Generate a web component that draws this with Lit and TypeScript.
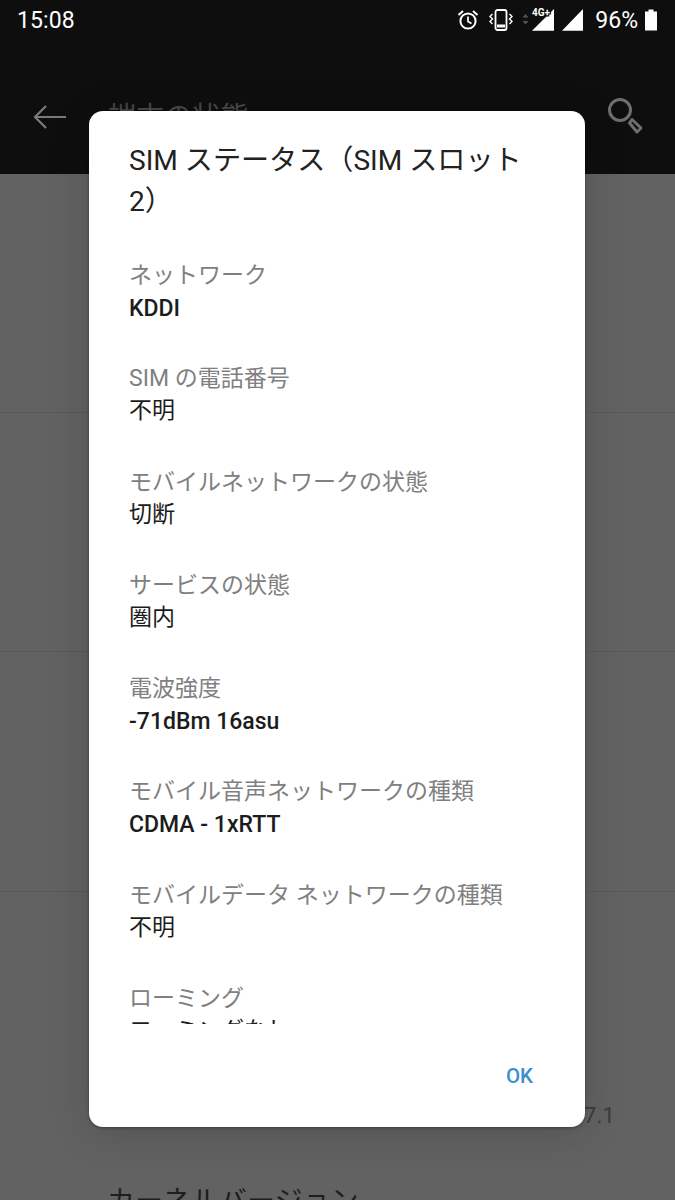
import { LitElement, html, css } from "lit";
import { customElement } from "lit/decorators.js";

const items: [string, string, boolean][] = [
  ["ネットワーク", "KDDI", true],
  ["SIM の電話番号", "不明", false],
  ["モバイルネットワークの状態", "切断", false],
  ["サービスの状態", "圏内", false],
  ["電波強度", "-71dBm 16asu", true],
  ["モバイル音声ネットワークの種類", "CDMA - 1xRTT", true],
  ["モバイルデータ ネットワークの種類", "不明", false],
  ["ローミング", "ローミングなし", false],
];

@customElement("app-root")
export class AppRoot extends LitElement {
  static styles = css`
    :host {
      display: block;
      position: relative;
      width: 675px;
      height: 1200px;
      overflow: hidden;
      background: #626262;
      font-family: Roboto, "Noto Sans CJK JP", sans-serif;
    }
    .top { background: #0e0e0e; height: 174px; display: flex; flex-direction: column; }
    .status { height: 40px; display: flex; align-items: center; padding: 0 17px; color: #fff; font-size: 23px; }
    .time { flex: 1; letter-spacing: 0.1px; }
    .status svg { display: block; flex: none; }
    .vib { margin-left: 10px; }
    .sig { margin-left: 9px; }
    .pct { margin: 0 6px 0 11px; }
    .appbar { flex: 1; display: flex; align-items: center; padding: 0 31px 0 33px; }
    .title { flex: 1; margin-left: 41px; color: #484848; font-size: 28.100px; padding-top: 14px; }
    .appbar svg { display: block; }
    .back { margin-top: 20px; }
    .search { margin-top: 18px; }
    .row { height: 238px; border-bottom: 1px solid #5a5a5a; }
    .row.last { height: 239px; }
    .ver { text-align: right; padding: 208px 60px 0 0; color: #3c3c3c; font-size: 22.500px; line-height: 30px; }
    .kernel { padding: 52px 0 0 107px; color: #1e1e1e; font-size: 28px; line-height: 40px; white-space: nowrap; }
    .dialog {
      position: absolute;
      left: 89px; top: 111px;
      width: 496px; height: 1016px;
      background: #fff;
      border-radius: 14px;
      box-shadow: 0 1px 3px rgba(0,0,0,.35), 0 6px 44px rgba(0,0,0,.16);
      display: flex;
      flex-direction: column;
    }
    h1 {
      margin: 0;
      padding: 29px 40px 0 40px;
      font-size: 28.100px;
      font-weight: 400;
      line-height: 41px;
      color: #222;
    }
    .scroll { height: 765px; margin-top: 37px; overflow: hidden; padding: 0 40px; flex: none; }
    .item { height: 103.300px; }
    .label { color: #808080; font-size: 23px; line-height: 34px; white-space: nowrap; }
    .value { color: #1c1c1c; font-size: 23px; line-height: 34px; margin-top: -2px; font-weight: 400; white-space: nowrap; }
    .value.latin { font-weight: 500; margin-top: -1px; }
    .actions { flex: 1; display: flex; justify-content: flex-end; align-items: flex-start; padding: 38px 52px 0 0; }
    .ok { color: #3b8fd1; font-size: 20.500px; font-weight: 500; line-height: 28px; }
  `;

  render() {
    return html`
      <div class="top">
        <div class="status">
          <span class="time">15:08</span>
          <svg width="22" height="22" viewBox="0 0 22 22" fill="none" stroke="#fff">
            <circle cx="11" cy="12" r="7.600" stroke-width="2"/>
            <path d="M11 7.500V12.500L14.500 14.500" stroke-width="1.700"/>
            <path d="M1.500 6L6 2M20.500 6L16 2" stroke-width="2"/>
          </svg>
          <svg class="vib" width="24" height="24" viewBox="0 0 24 24" fill="none" stroke="#fff">
            <rect x="6.500" y="2" width="11" height="20" rx="2" stroke-width="1.800"/>
            <path d="M8 18H16" stroke-width="3"/>
            <path d="M3.500 6L1 8.500L3.500 11L1 13.500L3.500 16" stroke-width="1.400"/>
            <path d="M20.500 6L23 8.500L20.500 11L23 13.500L20.500 16" stroke-width="1.400"/>
          </svg>
          <svg class="sig" width="62" height="24" viewBox="0 0 62 24">
            <path d="M0.500 5.500L3.500 2L6.500 5.500ZM0.500 9H6.500L3.500 12.500Z" fill="#555" transform="translate(0 4)"/>
            <path d="M32 1V22.700H10Z" fill="#fff"/>
            <text x="10" y="7.500" font-size="10" font-weight="700" fill="#fff" stroke="#0e0e0e" stroke-width="2.500" paint-order="stroke" font-family="Roboto, sans-serif">4G+</text>
            <path d="M61 1V22.700H40Z" fill="#fff"/>
          </svg>
          <span class="pct">96%</span>
          <svg width="14" height="22" viewBox="0 0 14 22" fill="#fff">
            <path d="M4.500 0.500H9.500V2.500H13V21.500H1V2.500H4.500Z"/>
          </svg>
        </div>
        <div class="appbar">
          <svg class="back" width="34" height="26" viewBox="0 0 34 26" fill="none" stroke="#7a7a7a" stroke-width="2.200">
            <path d="M33 13H2M13 2L2 13L13 24"/>
          </svg>
          <span class="title">端末の状態</span>
          <svg class="search" width="40" height="40" viewBox="0 0 40 40" fill="none" stroke="#6e6e6e" stroke-width="3">
            <circle cx="16" cy="14" r="10.500"/>
            <path d="M28 23.500L37 32L33 36L25.500 27Z" stroke-linejoin="round"/>
          </svg>
        </div>
      </div>
      <div class="row"></div>
      <div class="row"></div>
      <div class="row last"></div>
      <div class="ver">7.1</div>
      <div class="kernel">カーネルバージョン</div>
      <div class="dialog">
        <h1>SIM ステータス（SIM スロット 2）</h1>
        <div class="scroll">
          ${items.map(
            ([l, v, latin]) => html`<div class="item"><div class="label">${l}</div><div class="value ${latin ? "latin" : ""}">${v}</div></div>`
          )}
        </div>
        <div class="actions"><span class="ok">OK</span></div>
      </div>
    `;
  }
}
